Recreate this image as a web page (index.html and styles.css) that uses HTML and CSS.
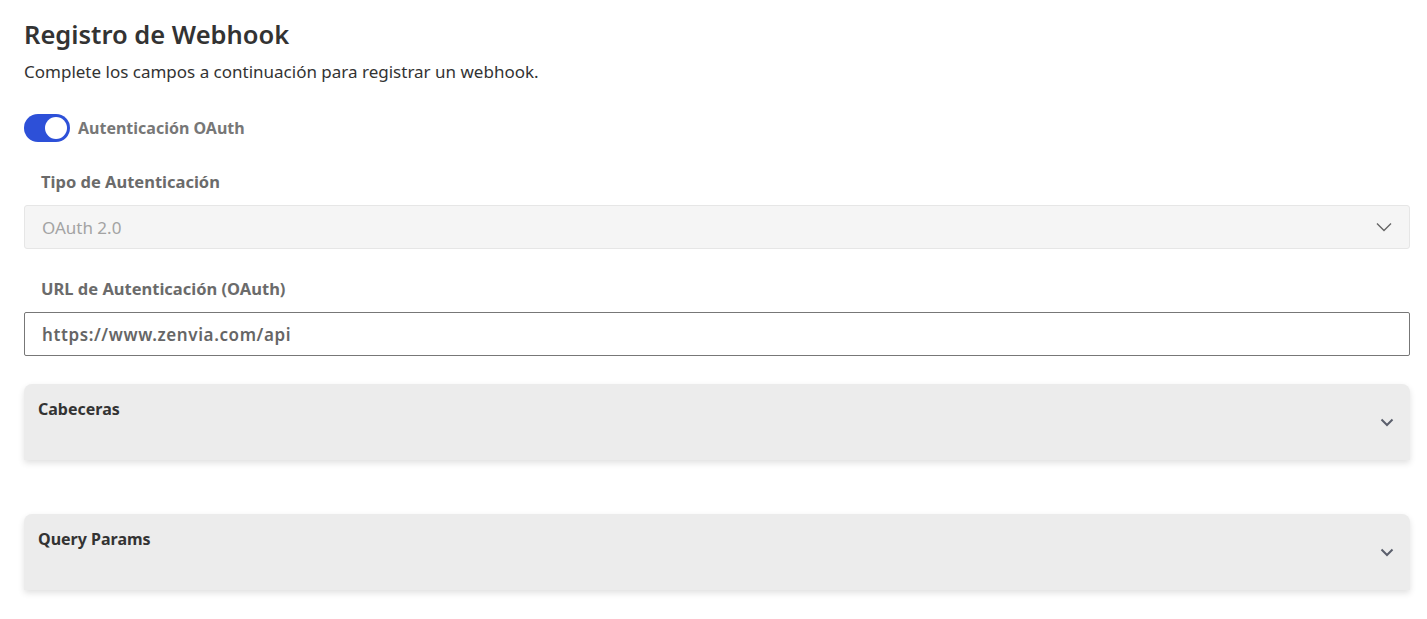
FILE: index.html
```html
<!DOCTYPE html>
<html lang="es">
<head>
  <meta charset="UTF-8">
  <meta name="viewport" content="width=device-width, initial-scale=1">
  <title>Registro de Webhook</title>
  <link rel="stylesheet" href="styles.css">
</head>
<body>

  <div class="page">
    <h1>Registro de Webhook</h1>
    <p class="intro">Complete los campos a continuación para registrar un webhook.</p>

    <label class="switch-row">
      <span class="switch"><span class="knob"></span></span>
      <span class="switch-label">Autenticación OAuth</span>
    </label>

    <div class="field">
      <div class="field-label">Tipo de Autenticación</div>
      <div class="select disabled">
        <span>OAuth 2.0</span>
        <svg width="16" height="10" viewBox="0 0 16 10"><path d="M1 1.5l7 7 7-7" fill="none" stroke="#666" stroke-width="1.4"/></svg>
      </div>
    </div>

    <div class="field">
      <div class="field-label">URL de Autenticación (OAuth)</div>
      <div class="input">https://www.zenvia.com/api</div>
    </div>

    <div class="accordion">
      <div class="acc-title">Cabeceras</div>
      <svg class="acc-icon" width="14" height="9" viewBox="0 0 14 9"><path d="M1.5 1.5l5.5 5.5 5.5-5.5" fill="none" stroke="#5b5f6c" stroke-width="2"/></svg>
    </div>

    <div class="accordion">
      <div class="acc-title">Query Params</div>
      <svg class="acc-icon" width="14" height="9" viewBox="0 0 14 9"><path d="M1.5 1.5l5.5 5.5 5.5-5.5" fill="none" stroke="#5b5f6c" stroke-width="2"/></svg>
    </div>
  </div>

</body>
</html>
```

FILE: styles.css
```css
body {
  font-family: "Noto Sans", Arial, sans-serif;
  background: white;
  color: #333;
  margin: 0;
}
.page {
  padding: 17px 17px 20px 24px;
}
h1 {
  font-size: 25.5px;
  font-weight: 600;
  margin: 0;
  line-height: 34px;
  color: #333;
}
.intro {
  font-size: 17px;
  margin: 11px 0 0;
  line-height: 20px;
}
.switch-row {
  display: flex;
  align-items: center;
  gap: 8px;
  margin-top: 32px;
}
.switch {
  width: 46px;
  height: 28px;
  border-radius: 14px;
  background: #2d50d8;
  position: relative;
}
.knob {
  position: absolute;
  right: 3px;
  top: 3px;
  width: 22px;
  height: 22px;
  border-radius: 50%;
  background: white;
}
.switch-label {
  font-size: 16px;
  font-weight: 700;
  color: #777;
}
.field {
  margin-top: 28px;
}
.field-label {
  font-size: 16.5px;
  font-weight: 700;
  color: #6b6b6b;
  padding-left: 17px;
  line-height: 24px;
  margin-bottom: 11px;
}
.select, .input {
  height: 44px;
  box-sizing: border-box;
  display: flex;
  align-items: center;
  padding: 0 17px;
  font-size: 17px;
}
.select {
  justify-content: space-between;
  background: #f5f5f5;
  border: 1px solid #e6e6e6;
  border-radius: 3px;
  color: #a3a3a3;
}
.input {
  border: 1px solid #777;
  border-radius: 2px;
  color: #666;
  font-weight: 600;
  letter-spacing: 0.6px;
}
.accordion {
  margin-top: 28px;
  height: 76px;
  background: #ececec;
  border-radius: 8px 8px 0 0;
  box-shadow: 0 3px 6px rgba(0,0,0,0.12);
  display: flex;
  justify-content: space-between;
  padding: 14px 16px 0 14px;
  box-sizing: border-box;
}
.accordion + .accordion {
  margin-top: 54px;
}
.acc-title {
  font-size: 16px;
  font-weight: 700;
  color: #333;
}
.acc-icon {
  margin-top: 20px;
}
```
